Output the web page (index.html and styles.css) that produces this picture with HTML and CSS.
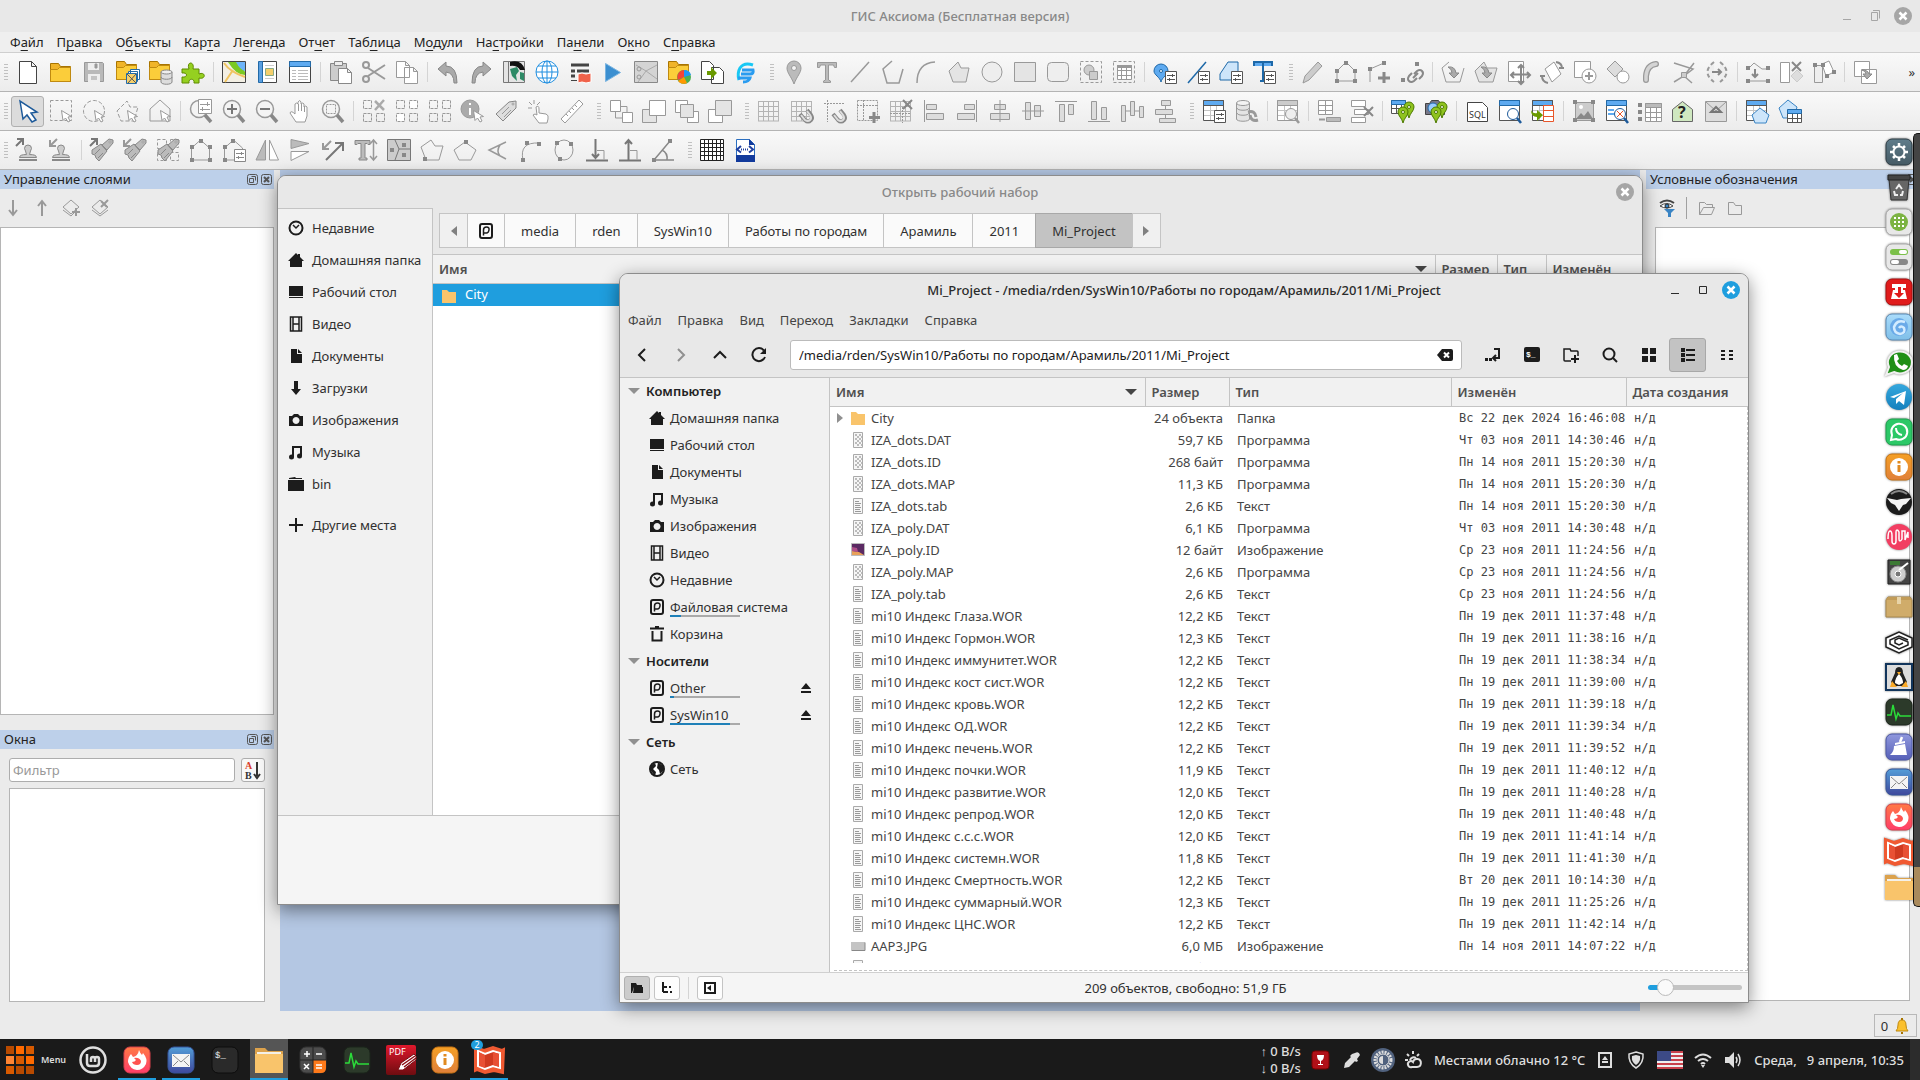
FILE: index.html
```html
<!DOCTYPE html>
<html lang="ru">
<head>
  <meta charset="UTF-8">
  <title>ГИС Аксиома</title>
  <link rel="stylesheet" href="styles.css">
</head>
<body>
<svg class="defs" width="0" height="0" aria-hidden="true">
  <linearGradient id="gFire" x2="0" y2="1"><stop stop-color="#ff7a45"/><stop offset="1" stop-color="#ff3d6a"/></linearGradient>
  <linearGradient id="gMail" x2="0" y2="1"><stop stop-color="#539ed8"/><stop offset="1" stop-color="#3f489c"/></linearGradient>
  <linearGradient id="gSlate" x2="0" y2="1"><stop stop-color="#607d8b"/><stop offset="1" stop-color="#455a64"/></linearGradient>
  <linearGradient id="gWave" x2="0" y2="1"><stop stop-color="#aadcfb"/><stop offset="1" stop-color="#7fbfe8"/></linearGradient>
  <linearGradient id="gTele" x2="0" y2="1"><stop stop-color="#35a8de"/><stop offset="1" stop-color="#1580bd"/></linearGradient>
  <linearGradient id="gSweep" x2="0" y2="1"><stop stop-color="#9098dd"/><stop offset="1" stop-color="#5660b8"/></linearGradient>
  <linearGradient id="gInfo" x2="0" y2="1"><stop stop-color="#f5a025"/><stop offset="1" stop-color="#e0803a"/></linearGradient>
  <linearGradient id="gPdf" x2="0" y2="1"><stop stop-color="#e0182c"/><stop offset="1" stop-color="#6e0c10"/></linearGradient>
</svg>
<div class="app">
  <header class="titlebar inactive">
    <h1>ГИС Аксиома (Бесплатная версия)</h1>
    <div class="controls">
      <button data-icon="min" aria-label="Свернуть"></button>
      <button data-icon="restore" aria-label="Развернуть"></button>
      <button class="close" data-icon="close" aria-label="Закрыть"></button>
    </div>
  </header>
  <nav class="menubar">
    <a href="#">Ф<u>а</u>йл</a><a href="#">П<u>р</u>авка</a><a href="#">О<u>б</u>ъекты</a><a href="#">Кар<u>т</u>а</a><a href="#">Л<u>е</u>генда</a><a href="#">От<u>ч</u>ет</a><a href="#">Таб<u>л</u>ица</a><a href="#">М<u>о</u>дули</a><a href="#">На<u>с</u>тройки</a><a href="#">Па<u>н</u>ели</a><a href="#">О<u>к</u>но</a><a href="#">С<u>п</u>равка</a>
  </nav>
  <div class="toolbar" data-tools="# new open save openSet openDb puzzle | map report table | paste cut copy | undo redo globeBook globe python play scissorsMap folderColor importDoc edge # pin textT line polyline arc polygon circle square roundSq groupFrame tableFrame | pinSet lineSet polySet textSet # pencil nodes nodeAdd nodeLink | rotOpen rotPoly moveSheet rotSheet addShape diamond pipe cross mirror | smooth delPart splitRect | copyTo"><span class="more">»</span></div>
  <div class="toolbar" data-tools="# cursor selRect selCircle selPoly selHouse | zoomSet zoomIn zoomOut hand zoomFit | selDel selInv selAll info tag tap ruler # order1 order2 order3 order4 # grid gridMagnet snap gridAdd gridDel alLeft alRight alCenter alMiddle alTop alBottom distH distV # tableSet dbSync | tableFind | rowAdd rowDel | tablePins camPins | sql tableZoom tableImp | image tableErr tableList help mail | tablePoly polyTable"></div>
  <div class="toolbar" data-tools="# stampUp stampDown | brushUp brushDown brushSel house houseSet flipH flipV arrowsX textUp mapNodes pentA pentB angle arcN ellN perpDown perpUp angleB # hatch xml"></div>

  <main class="workspace">
    <aside class="side">
      <section class="panel layers">
        <h2>Управление слоями <span><button data-icon="float" aria-label="Открепить"></button><button data-icon="xbox" aria-label="Закрыть"></button></span></h2>
        <div class="panel-tools">
          <button data-icon="down" aria-label="Ниже"></button>
          <button data-icon="up" aria-label="Выше"></button>
          <button data-icon="layerAdd" aria-label="Добавить слой"></button>
          <button data-icon="layerDel" aria-label="Удалить слой"></button>
        </div>
        <div class="sheet"></div>
      </section>
      <section class="panel windows">
        <h2>Окна <span><button data-icon="float" aria-label="Открепить"></button><button data-icon="xbox" aria-label="Закрыть"></button></span></h2>
        <div class="filter">
          <input type="text" placeholder="Фильтр" aria-label="Фильтр">
          <button data-icon="sort" aria-label="Сортировка"></button>
        </div>
        <div class="sheet"></div>
      </section>
    </aside>
    <div class="mdi"></div>
    <aside class="side">
      <section class="panel legend">
        <h2>Условные обозначения <span><button data-icon="xbox" aria-label="Закрыть"></button></span></h2>
        <div class="panel-tools">
          <button data-icon="eyeFilter" aria-label="Фильтр"></button><i></i>
          <button data-icon="folderOpenG" aria-label="Развернуть"></button>
          <button data-icon="folderG" aria-label="Свернуть"></button>
        </div>
        <div class="sheet"></div>
      </section>
    </aside>
  </main>
  <div class="status"><button class="bell">0 <span data-icon="bell"></span></button></div>
</div>

<!-- open file dialog -->
<section class="window dialog">
  <header class="titlebar inactive">
    <h1>Открыть рабочий набор</h1>
    <div class="controls"><button class="close" data-icon="close" aria-label="Закрыть"></button></div>
  </header>
  <div class="dialog-body">
    <nav class="places">
      <a href="#"><span data-icon="recent"></span>Недавние</a>
      <a href="#"><span data-icon="home"></span>Домашняя папка</a>
      <a href="#"><span data-icon="desk"></span>Рабочий стол</a>
      <a href="#"><span data-icon="video"></span>Видео</a>
      <a href="#"><span data-icon="doc"></span>Документы</a>
      <a href="#"><span data-icon="load"></span>Загрузки</a>
      <a href="#"><span data-icon="photo"></span>Изображения</a>
      <a href="#"><span data-icon="music"></span>Музыка</a>
      <a href="#"><span data-icon="bin"></span>bin</a>
      <a href="#" class="other"><span data-icon="plus"></span>Другие места</a>
    </nav>
    <div class="chooser">
      <div class="path">
        <button class="arrow" data-icon="triLeft" aria-label="Назад"></button>
        <button data-icon="disk" aria-label="Диск"></button>
        <button>media</button><button>rden</button><button>SysWin10</button><button>Работы по городам</button><button>Арамиль</button><button>2011</button><button class="current">Mi_Project</button>
        <button class="arrow" data-icon="triRight" aria-label="Вперёд"></button>
      </div>
      <table class="list">
        <thead><tr><th>Имя<span class="sorted" data-icon="triDown"></span></th><th class="c-size">Размер</th><th class="c-type">Тип</th><th class="c-date">Изменён</th></tr></thead>
        <tbody><tr class="selected"><td colspan="4"><span data-icon="folder"></span>City</td></tr></tbody>
      </table>
    </div>
  </div>
  <footer></footer>
</section>

<!-- file manager -->
<section class="window nemo">
  <header class="titlebar">
    <h1>Mi_Project - /media/rden/SysWin10/Работы по городам/Арамиль/2011/Mi_Project</h1>
    <div class="controls">
      <button data-icon="min" aria-label="Свернуть"></button>
      <button data-icon="max" aria-label="Развернуть"></button>
      <button class="close" data-icon="close" aria-label="Закрыть"></button>
    </div>
  </header>
  <nav class="menubar"><a href="#">Файл</a><a href="#">Правка</a><a href="#">Вид</a><a href="#">Переход</a><a href="#">Закладки</a><a href="#">Справка</a></nav>
  <div class="nav">
    <button data-icon="back" aria-label="Назад"></button>
    <button class="off" data-icon="forward" aria-label="Вперёд"></button>
    <button data-icon="upward" aria-label="Вверх"></button>
    <button data-icon="reload" aria-label="Обновить"></button>
    <div class="location">
      <input type="text" aria-label="Адрес" value="/media/rden/SysWin10/Работы по городам/Арамиль/2011/Mi_Project">
      <button data-icon="clear" aria-label="Очистить"></button>
    </div>
    <button data-icon="toggle" aria-label="Путь"></button>
    <button data-icon="term" aria-label="Терминал"></button>
    <button data-icon="newFolder" aria-label="Новая папка"></button>
    <button data-icon="search" aria-label="Поиск"></button>
    <button data-icon="vIcons" aria-label="Значки"></button>
    <button class="on" data-icon="vList" aria-label="Список"></button>
    <button data-icon="vCompact" aria-label="Компактно"></button>
  </div>
  <div class="nemo-body">
    <nav class="tree">
      <h3><span data-icon="triDown"></span>Компьютер</h3>
      <a href="#"><span data-icon="home"></span>Домашняя папка</a>
      <a href="#"><span data-icon="desk"></span>Рабочий стол</a>
      <a href="#"><span data-icon="doc"></span>Документы</a>
      <a href="#"><span data-icon="music"></span>Музыка</a>
      <a href="#"><span data-icon="photo"></span>Изображения</a>
      <a href="#"><span data-icon="video"></span>Видео</a>
      <a href="#"><span data-icon="recent"></span>Недавние</a>
      <a href="#"><span data-icon="disk"></span><b class="usage fs">Файловая система</b></a>
      <a href="#"><span data-icon="trash"></span>Корзина</a>
      <h3><span data-icon="triDown"></span>Носители</h3>
      <a href="#"><span data-icon="disk"></span><b class="usage other-disk">Other</b><span class="eject" data-icon="eject"></span></a>
      <a href="#"><span data-icon="disk"></span><b class="usage win-disk">SysWin10</b><span class="eject" data-icon="eject"></span></a>
      <h3><span data-icon="triDown"></span>Сеть</h3>
      <a href="#"><span data-icon="net"></span>Сеть</a>
    </nav>
    <div class="files">
      <div class="clip">
        <table class="list">
          <thead><tr><th>Имя<span class="sorted" data-icon="triDown"></span></th><th class="f-size">Размер</th><th class="f-type">Тип</th><th class="f-date">Изменён</th><th class="f-made">Дата создания</th></tr></thead>
          <tbody id="rows"></tbody>
        </table>
      </div>
    </div>
  </div>
  <footer>
    <button class="on" data-icon="sbPlaces" aria-label="Места"></button>
    <button data-icon="sbTree" aria-label="Дерево"></button>
    <i></i>
    <button data-icon="sbHide" aria-label="Скрыть"></button>
    <p>209 объектов, свободно: 51,9 ГБ</p>
    <input type="range" min="0" max="100" value="12" aria-label="Масштаб">
  </footer>
</section>

<!-- right edge dock -->
<div class="dock" id="dock"></div>
<div class="edge"></div>

<footer class="taskbar">
  <button class="start"><span data-icon="startGrid"></span>Menu</button>
  <button data-icon="mint" aria-label="Mint"></button>
  <button class="run" data-icon="aFirefox" aria-label="Firefox"></button>
  <button class="run" data-icon="aMail" aria-label="Почта"></button>
  <button data-icon="aTerm" aria-label="Терминал"></button>
  <button class="run on" data-icon="aFolder" aria-label="Файлы"></button>
  <button data-icon="aCalc" aria-label="Калькулятор"></button>
  <button data-icon="aPulse" aria-label="Монитор"></button>
  <button data-icon="aPdf" aria-label="PDF"></button>
  <button data-icon="aInfo" aria-label="Отчёты"></button>
  <button class="run badge" data-icon="aMap" aria-label="Аксиома"></button>
  <div class="tray">
    <span class="speed">↑ 0 B/s<br>↓ 0 B/s</span>
    <span data-icon="tCup"></span>
    <span data-icon="tPick"></span>
    <span data-icon="tGear"></span>
    <span data-icon="tSun"></span>
    <span class="weather">Местами облачно 12 °C</span>
    <span data-icon="tUsb"></span>
    <span data-icon="tShield"></span>
    <span class="flag" data-icon="tFlag"></span>
    <span data-icon="tWifi"></span>
    <span data-icon="tSound"></span>
    <time>Среда, &nbsp; 9 апреля, 10:35</time>
  </div>
</footer>
<script src="main.js"></script>
</body>
</html>
```
FILE: styles.css
```css
* {
  box-sizing: border-box;
}
body {
  margin: 0;
  height: 100vh;
  display: flex;
  flex-direction: column;
  overflow: hidden;
  position: relative;
  background: #ebebeb;
  color: #303030;
  font-family: "Noto Sans", "Open Sans", sans-serif;
  font-size: 13px;
  line-height: 18px;
}
button, input {
  font: inherit;
  color: inherit;
  border: 0;
  padding: 0;
  margin: 0;
  background: none;
}
a {
  color: inherit;
  text-decoration: none;
}
h1, h2, h3, p {
  margin: 0;
  font-size: 13px;
  font-weight: normal;
}
svg {
  display: block;
  fill: none;
  stroke: currentColor;
  overflow: visible;
}
svg text {
  stroke: none;
}
.defs {
  position: absolute;
}
[data-icon] {
  display: inline-flex;
  align-items: center;
  justify-content: center;
  flex: none;
}

/* main application */
.app {
  flex: 1;
  min-height: 0;
  display: flex;
  flex-direction: column;
}
.titlebar {
  height: 32px;
  display: flex;
  align-items: center;
  position: relative;
  color: #2b2b2b;
  background: #e8e8e8;
}
.titlebar h1 {
  flex: 1;
  text-align: center;
  font-weight: 500;
}
.titlebar.inactive {
  color: #888;
}
.controls {
  position: absolute;
  right: 8px;
  top: 7px;
  display: flex;
  gap: 10px;
}
.controls button {
  width: 18px;
  height: 18px;
}
.controls .close {
  border-radius: 50%;
  background: #1f9ede;
  color: #fff;
}
.inactive .controls {
  color: #a6a6a6;
}
.inactive .controls .close {
  background: #a6a6a6;
}
.menubar {
  height: 20px;
  display: flex;
  gap: 13px;
  padding-left: 10px;
  align-items: center;
  background: #efefef;
  color: #222;
}
.menubar u {
  text-underline-offset: 3px;
}
.toolbar {
  height: 39px;
  display: flex;
  align-items: center;
  border-top: 1px solid #cfcfcf;
  background: linear-gradient(#f9f9f9, #ececec);
  color: #999;
}
.toolbar + .toolbar {
  border-top-color: #b4b4b4;
}
.toolbar button {
  width: 33px;
  height: 31px;
  display: flex;
  align-items: center;
  justify-content: center;
}
.toolbar .active {
  background: #dcdcdc;
  border: 1px solid #b0b0b0;
  border-radius: 3px;
}
.toolbar .sep {
  width: 1px;
  height: 20px;
  margin: 0 3px 0 4px;
  background: #d4d4d4;
}
.toolbar .grip {
  width: 4px;
  height: 18px;
  margin: 0 3px 0 9px;
  background: radial-gradient(#aaa 40%, transparent 50%) 0 0 / 2px 3px;
  opacity: .7;
}
.toolbar .grip:first-child {
  margin-left: 4px;
}
.more {
  margin-left: auto;
  padding-right: 5px;
  color: #333;
}
.workspace {
  flex: 1;
  min-height: 0;
  display: grid;
  grid-template-columns: 274px 1fr 274px;
  gap: 6px;
  border-top: 1px solid #b4b4b4;
}
.mdi {
  background: #b4c7e3;
}
.side {
  display: flex;
  flex-direction: column;
  gap: 15px;
}
.panel {
  display: flex;
  flex-direction: column;
}
.panel h2 {
  height: 19px;
  padding: 0 2px 2px 4px;
  display: flex;
  align-items: center;
  justify-content: space-between;
  background: #bdd0ea;
  color: #222;
}
.panel h2 span {
  display: flex;
  gap: 3px;
}
.panel h2 button {
  color: #555;
}
.panel-tools {
  height: 38px;
  padding: 0 3px;
  display: flex;
  align-items: center;
  gap: 9px;
  color: #999;
}
.panel-tools button {
  width: 20px;
}
.panel-tools i {
  width: 1px;
  height: 22px;
  background: #a0a0a0;
}
.sheet {
  flex: 1;
  background: #fff;
  border: 1px solid #b5b5b5;
}
.layers {
  flex: 489 1 57px;
}
.windows {
  flex: 214 1 67px;
}
.windows .sheet {
  margin: 6px 9px 9px;
}
.legend {
  flex: 1;
}
.legend .panel-tools {
  padding-left: 11px;
}
.legend .sheet {
  margin: 0 10px 10px 9px;
}
.filter {
  padding: 9px 9px 0;
  display: flex;
  gap: 6px;
}
.filter input {
  flex: 1;
  height: 24px;
  padding: 0 3px;
  background: #fff;
  border: 1px solid #adadad;
  border-radius: 3px;
}
.filter input::placeholder {
  color: #999;
}
.filter button {
  width: 24px;
  height: 24px;
  border: 1px solid #adadad;
  border-radius: 3px;
  background: #f8f8f8;
}
.status {
  height: 28px;
  display: flex;
  justify-content: flex-end;
  padding: 3px 3px 2px;
}
.bell {
  width: 43px;
  border: 1px solid #b8b8b8;
  display: flex;
  align-items: center;
  justify-content: center;
  gap: 6px;
}

/* windows */
.window {
  position: absolute;
  display: flex;
  flex-direction: column;
  border: 1px solid #8c8c8c;
  border-radius: 9px 9px 0 0;
  background: #e8e8e8;
  box-shadow: 0 5px 18px rgba(0, 0, 0, .45);
  overflow: hidden;
}
.dialog {
  inset: 175px 277px 175px 277px;
}
.nemo {
  inset: 273px 171px 77px 619px;
}
.window .menubar {
  height: 28px;
  gap: 16px;
  padding-left: 8px;
  background: none;
  color: #444;
}
.dialog-body {
  flex: 1;
  display: flex;
}
.dialog footer {
  height: 89px;
  background: #f5f5f5;
  border-top: 1px solid #c4c4c4;
}
.places {
  width: 155px;
  background: #f1f1f1;
  border: solid #c4c4c4;
  border-width: 1px 1px 0 0;
  padding-top: 3px;
}
.places a {
  height: 32px;
  padding-left: 9px;
  display: flex;
  align-items: center;
  gap: 7px;
  white-space: nowrap;
}
.places .other {
  margin-top: 9px;
}
.places [data-icon], .tree a > [data-icon] {
  width: 18px;
  color: #1c1c1c;
}
.chooser {
  flex: 1;
  background: #fff;
}
.path {
  display: flex;
  height: 46px;
  padding: 5px 6px 6px;
  background: #e8e8e8;
}
.path button {
  padding: 0 16px;
  background: #fafafa;
  border: 1px solid #c4c4c4;
  margin-right: -1px;
}
.path [data-icon] {
  padding: 0;
  width: 38px;
  color: #1c1c1c;
}
.path .arrow {
  width: 29px;
  background: #f0f0f0;
  color: #808080;
}
.path .current {
  background: #c3c3c3;
  border-color: #a8a8a8;
}
.list {
  width: 100%;
  table-layout: fixed;
  border-collapse: collapse;
}
.list th {
  height: 29px;
  padding: 0 6px;
  text-align: left;
  font-weight: 600;
  color: #505050;
  background: #f1f1f1;
  border: 1px solid #c4c4c4;
  border-width: 1px 0 1px 1px;
}
.list th:first-child {
  border-left: 0;
}
.list td {
  height: 22px;
  padding: 0 6px 0 8px;
  white-space: nowrap;
  color: #454545;
}
.sorted {
  float: right;
  height: 18px;
  margin-right: 2px;
  color: #454545;
}
.c-size { width: 62px; }
.c-type { width: 49px; }
.c-date { width: 96px; }
.selected td {
  background: #1f9ede;
  color: #fff;
}
.selected [data-icon] {
  margin-right: 8px;
  vertical-align: middle;
}

/* file manager */
.nav {
  height: 43px;
  padding: 0 3px 2px;
  display: flex;
  align-items: center;
  color: #1c1c1c;
}
.nav > button {
  width: 37px;
  height: 34px;
  margin-right: 2px;
}
.nav > button:last-child {
  margin-right: 0;
}
.nav .off {
  color: #909090;
}
.nav .on {
  background: #c3c3c3;
  border: 1px solid #a8a8a8;
  border-radius: 3px;
}
.location {
  flex: 1;
  height: 30px;
  margin: 0 12px 0 11px;
  padding-right: 8px;
  display: flex;
  background: #fff;
  border: 1px solid #bbb;
  border-radius: 3px;
}
.location input {
  flex: 1;
  padding-left: 8px;
}
.nemo-body {
  flex: 1;
  min-height: 0;
  display: flex;
}
.tree {
  width: 210px;
  background: #f1f1f1;
  border: solid #c4c4c4;
  border-width: 1px 1px 0 0;
}
.tree h3 {
  height: 27px;
  display: flex;
  align-items: center;
  gap: 6px;
  padding: 0 0 2px 8px;
  font-weight: 600;
  color: #222;
}
.tree h3 [data-icon] {
  color: #909090;
}
.tree a {
  height: 27px;
  display: flex;
  align-items: center;
  gap: 4px;
  padding: 0 0 2px 28px;
}
.usage {
  position: relative;
  font-weight: normal;
}
.usage::after {
  content: "";
  position: absolute;
  left: 0;
  bottom: -1px;
  width: 70px;
  height: 2px;
  background: linear-gradient(90deg, #1f80b8 var(--used), #aaa var(--used));
}
.fs { --used: 11px; }
.other-disk { --used: 4px; }
.win-disk { --used: 60px; }
.tree .eject {
  margin: 0 14px 0 auto;
}
.files {
  flex: 1;
  background: #fff;
  padding-bottom: 9px;
  position: relative;
}
.files::after {
  content: "";
  position: absolute;
  inset: 30px 0 1px 4px;
  border: dashed #c4c4c4;
  border-width: 0 1px 1px 0;
}
.clip {
  height: 100%;
  overflow: hidden;
}
.f-size { width: 84px; }
.f-type { width: 222px; }
.f-date { width: 175px; }
.f-made { width: 122px; }
.files td:nth-child(2) {
  text-align: right;
}
.files td:nth-child(n + 4) {
  font-family: "DejaVu Sans Mono", monospace;
  font-size: 12px;
  white-space: pre;
}
.files td:first-child {
  padding-left: 5px;
}
.name {
  display: flex;
  align-items: center;
  gap: 4px;
}
.name .twist {
  width: 10px;
  color: #909090;
}
.name .kind {
  width: 18px;
  color: #aaa;
}
.nemo footer {
  height: 30px;
  padding: 0 6px 0 4px;
  display: flex;
  align-items: center;
  gap: 4px;
  background: #f5f5f5;
  border-top: 1px solid #d0d0d0;
  color: #303030;
}
.nemo footer button {
  width: 26px;
  height: 24px;
  background: #fdfdfd;
  border: 1px solid #c4c4c4;
  border-radius: 3px;
  color: #1c1c1c;
}
.nemo footer .on {
  background: #ccc;
  border-color: #b0b0b0;
}
.nemo footer i {
  width: 1px;
  height: 22px;
  margin: 0 4px;
  background: #d4d4d4;
}
.nemo footer p {
  flex: 1;
  text-align: center;
}
input[type="range"] {
  appearance: none;
  width: 94px;
  height: 18px;
}
input[type="range"]::-webkit-slider-runnable-track {
  height: 5px;
  border-radius: 3px;
  background: linear-gradient(90deg, #1f9ede 16px, #c4c4c4 16px);
}
input[type="range"]::-webkit-slider-thumb {
  appearance: none;
  width: 17px;
  height: 17px;
  margin-top: -6px;
  border: 1px solid #bbb;
  border-radius: 50%;
  background: #fafafa;
}

/* side dock */
.dock {
  position: absolute;
  top: 139px;
  right: 8px;
  display: grid;
  gap: 9px;
}
.dock button {
  width: 26px;
  height: 26px;
  filter: drop-shadow(0 0 1px rgba(0, 0, 0, .5));
}
.edge {
  position: absolute;
  top: 133px;
  right: 0;
  bottom: 173px;
  width: 7px;
  border: 1px solid #111;
  border-right: 0;
  border-radius: 5px 0 0 5px;
  background: linear-gradient(#444 95%, #a98a5c 95%);
}

/* taskbar */
.taskbar {
  height: 41px;
  display: flex;
  gap: 6px;
  padding-left: 6px;
  background: #1a1a1a;
  border-right: 10px solid #2c2c2c;
  color: #dedede;
}
.taskbar > button {
  width: 38px;
  position: relative;
}
.taskbar > .start {
  width: 62px;
  display: flex;
  align-items: center;
  gap: 7px;
  font-size: 9px;
  font-weight: 600;
}
.taskbar .on {
  background: #555;
}
.run::after {
  content: "";
  position: absolute;
  left: 0;
  right: 0;
  bottom: 0;
  height: 2px;
  background: #1f9ede;
}
.badge::before {
  content: "2";
  position: absolute;
  left: 1px;
  top: 1px;
  width: 12px;
  height: 10px;
  border-radius: 5px;
  background: #1f9ede;
  color: #fff;
  font-size: 9px;
  line-height: 10px;
  z-index: 1;
}
.tray {
  margin-left: auto;
  padding-right: 6px;
  display: flex;
  align-items: center;
  gap: 9px;
  font-weight: 500;
  white-space: nowrap;
}
.tray [data-icon] {
  width: 22px;
}
.tray .flag {
  width: 27px;
}
.speed {
  line-height: 17px;
}
```
FILE: main.js
```js
// pieces shared by several icons
const set = '<path fill="#fff" stroke="#555" d="M12.500 11.500h11v12h-11z"/><path stroke="#555" d="M14 15.500h8M14 19.500h8M19.500 14v3M16.500 18v3"/>';
const cur = '<path fill="#fff" d="M12.500 11.500l1.500 10 2.500-2.500 2.500 4 2-1-2-4 3.500-.5z"/>';
const sq4 = (a, b) => `<path stroke-dasharray="3 1" d="M1.500 1.500h8v8h-8zM1.500 14.500h8v8h-8zM14.500 14.500h8v8h-8z${a ? 'M14.500 1.500h8v8h-8z' : ''}"/>${b || ''}`;
const lens = '<circle cx="10" cy="10" r="8.500" fill="#f4f4f4" stroke-width="1.500"/><path stroke-width="3.500" stroke="#888" d="M16 16l6 7"/>';
const lens2 = (c, f) => `<circle cx="15" cy="15" r="5.500" fill="${f}" stroke="${c}"/><path stroke="${c}" stroke-width="2.500" d="M19 19l4 5"/>`;
const tbl = (c, h) => `<path fill="#fff" stroke="${c}" d="M1.500 1.500h20v20h-20z"/><path fill="${h}" stroke="${c}" d="M1.500 1.500h20v5h-20z"/><path stroke="#c4c4c4" d="M2 11.500h19M2 16.500h19M8.500 7v14M14.500 7v14"/>`;
// map pin whose tip is at x, y
const pinAt = (x, y, c, f, r = 5) => `<path fill="${f}" stroke="${c}" d="M${x} ${y}c-1-5-${r}-7-${r}-11a${r} ${r} 0 0 1 ${2 * r} 0c0 4-${r - 1} 6-${r} 11z"/><circle cx="${x}" cy="${y - 11}" r="1.500" fill="#fff" stroke="${c}"/>`;
const gpins = pinAt(18, 19, '#4d7a00', '#8fc31f') + pinAt(12, 24, '#4d7a00', '#8fc31f');
const folderY = '<path fill="#f0b429" stroke="#a87400" d="M1.500 3.500h8l2 3h10v15h-20z"/><path fill="#fbcd3a" stroke="#c08a10" d="M1.500 9.500h7l2-2h11v14h-20z"/>';
const dots = a => a.map(([x, y]) => `<path fill="#888" stroke="none" d="M${x - 2} ${y - 2}h4v4h-4z"/>`).join('');
const brush = '<path fill="#bbb" stroke="#888" d="M2 12l9-6 6 7-8 10-3-3-1-3-3-1zM12 7l7-6 4 1v3l-6 7z"/><path stroke="#888" d="M11 6l6 7M5 16l5-5M8 20l5-5"/><circle cx="20" cy="4" r="1" fill="#fff"/>';
const house = '<path d="M2.500 22v-12l9-8 9 8v12z"/>';
const stamp = '<path fill="#ccc" stroke="#888" d="M3.500 19.500q0-3 7-3-1-4-2-6a3.500 3.500 0 1 1 7 0q-1 2-2 6 7 0 7 3z"/><path stroke="#888" stroke-width="2" d="M3 22h18"/>';
const magnet = '<path stroke="#888" stroke-width="4" d="M10 15l5 6q3 3 6 0 2-2 0-5l-4-5"/><path stroke="#ddd" stroke-width="2" d="M11 16l4 5q3 2 5 0 2-2 0-5l-3-4"/>';
const gridP = '<path stroke="#b4b4b4" d="M1.500 2v20M6.500 2v20M11.500 2v20M16.500 2v20M21.500 2v20M1 2.500h21M1 7.500h21M1 12.500h21M1 17.500h21M1 22h21"/>';
const tile = (f, s) => `<rect x="1" y="1" width="26" height="26" rx="6" fill="${f}" stroke="${s}"/>`;
const fileBox = '<path fill="#f6f6f6" stroke="#aaa" d="M3.500.5h9v15h-9z"/>';

const icons = {
  new: '<path fill="#fff" stroke="#444" d="M3.500 1.500h12l5 5v17h-17zM15.500 1.500v5h5"/>',
  open: folderY,
  save: '<path fill="#b9b9b9" stroke="#999" d="M2.500 2.500h18l1 1v18h-19z"/><path fill="#eee" stroke="none" d="M6 3h11v7h-11zM6 14h12v8h-12z"/><path fill="#999" d="M13 4h2v4h-2zM9 17h6M9 19h6"/>',
  openSet: '<g transform="translate(0 -2)">' + folderY + '</g><path fill="#fff" stroke="#226aa8" d="M15.500 9.500h9v10h-9zM13.500 11.500h9v10h-9z"/><path fill="#f5cf6b" stroke="#226aa8" d="M11.500 13.500h10v10h-10z"/><path stroke="#555" d="M12 14l9 9M21 14l-8 9"/>',
  openDb: '<g transform="translate(0 -2)">' + folderY + '</g><path fill="#ddd" stroke="#888" d="M13 12v10c0 3 11 3 11 0v-10"/><ellipse cx="18.500" cy="12" rx="5.500" ry="2" fill="#eee" stroke="#888"/><path stroke="#888" d="M13 17c0 3 11 3 11 0"/>',
  puzzle: '<path fill="#95d020" stroke="#5f8a00" d="M1 9h7c-3-8 6-8 4 0h6v5c7-3 7 6 0 4v5h-5c1-5-6-5-5 0h-7v-6c6 1 6-5 0-4z"/>',
  map: '<path fill="#f3efe4" stroke="#444" d="M.5 1.500h23v21h-23z"/><path fill="#7ac923" stroke="none" d="M6 2h12l5 10v3q-9 0-17-13z"/><path fill="#6db3f8" stroke="none" d="M14 2h9v9q-5-1-9-9z"/><path stroke="#f0c460" stroke-width="2" d="M2 3q6 9 21 14M11 10l-8 12"/>',
  report: '<path fill="#fff" stroke="#444" d="M4.500 1.500h17v21h-17z"/><path fill="#5a9fe0" stroke="#226aa8" d="M3.500 1.500h4v21h-4z"/><path fill="#f5cf6b" stroke="#8a8" d="M10.500 8.500h8v7h-8z"/><path stroke="#ccc" d="M10 5.500h9M10 18.500h9"/>',
  table: '<path fill="#fff" stroke="#444" d="M1.500 1.500h21v21h-21z"/><path fill="#5eaaf0" stroke="#226aa8" d="M1.500 1.500h21v5h-21z"/><path stroke="#bbb" d="M4 10.500h4M10 10.500h10M4 13.500h4M10 13.500h10M4 16.500h4M10 16.500h10M4 19.500h4M10 19.500h10"/>',
  paste: '<path fill="#ccc" stroke="#888" d="M1.500 3.500h16v17h-16z"/><path fill="#eee" stroke="#888" d="M5.500 1.500h8v4h-8z"/><path fill="#fff" stroke="#888" d="M9.500 8.500h9l4 4v11h-13zM18.500 8.500v4h4"/>',
  cut: '<path stroke-width="2" d="M23 5L6 16M23 19L6 8"/><circle cx="4" cy="5" r="3" stroke-width="2"/><circle cx="4" cy="19" r="3" stroke-width="2"/>',
  copy: '<path fill="#fff" d="M1.500 1.500h9l4 4v12h-13zM10.500 1.500v4h4M9.500 7.500h9l4 4v12h-13zM18.500 7.500v4h4"/>',
  undo: '<path fill="#aaa" stroke="#888" d="M2 9l8-7v4q11 0 11 17h-3q0-10-8-11v4z"/>',
  redo: '<path fill="#aaa" stroke="#888" d="M22 9l-8-7v4q-11 0-11 17h3q0-10 8-11v4z"/>',
  globeBook: '<path fill="#e4e4e4" stroke="#777" d="M1.500 1.500h21v21h-21z"/><path fill="#111" stroke="none" d="M8 2q12-3 15 8h-5q-3-5-10-4z"/><path fill="#2d8a66" stroke="none" d="M8 9l7-2 2 4-3 4 1 6-5-5zM18 12l4 1v8l-4-2z"/><path stroke="#777" d="M6.500 2v20"/>',
  globe: '<g stroke="#1f8ee0" fill="#fff"><circle cx="12" cy="12" r="11"/><ellipse cx="12" cy="12" rx="5" ry="11"/><path d="M12 1v22M1 12h22M3 6h18M3 18h18"/></g>',
  python: '<path stroke="#444" stroke-width="3" d="M3 5h18M3 11h4M9 11h12M3 16h4"/><path stroke="#444" d="M3 20.500h6"/><path fill="#f0624a" stroke="#fff" d="M10 14l4-1 4 1 5-1v9l-5 1-4-1-4 1z"/>',
  play: '<path fill="#3c8fd0" stroke="#7ab4e0" d="M4.500 3.500v18l15-9z"/>',
  scissorsMap: '<path fill="#d4d4d4" stroke="#888" d="M.5 1.500h23v21h-23z"/><path stroke="#aaa" d="M2 5l10 6 11-6M4 22l8-11 11 8"/><circle cx="5" cy="9" r="2"/><circle cx="5" cy="17" r="2"/>',
  folderColor: '<g transform="translate(0 -2)">' + folderY + '</g><circle cx="17" cy="17" r="7" fill="#4caf50" stroke="none"/><path fill="#f44336" stroke="none" d="M17 17v-7a7 7 0 0 0-6 10z"/><path fill="#ff9800" stroke="none" d="M17 17l-6 4a7 7 0 0 0 9 2z"/><path fill="#2196f3" stroke="none" d="M17 17v-7a7 7 0 0 1 7 5z"/>',
  importDoc: '<path fill="#fff" stroke="#444" d="M1.500 1.500h8l4 4v14h-12zM11.500 7.500h8l4 4v12h-12z"/><path fill="#6a9a00" stroke="none" d="M7 11h4v-4l6 6-6 6v-4h-4z"/>',
  edge: '<path stroke="#18c8f4" stroke-width="3" d="M20 5q-9-3-13 3-3 5-1 12"/><path stroke="#2a9cf0" stroke-width="3" d="M9 10h11q1 4-3 4H8M5 18h12q-1 4-7 4"/>',
  pin: '<path fill="#bbb" stroke="#999" d="M12 24c-3-8-7-11-7-16a7 7 0 0 1 14 0c0 5-4 8-7 16z"/><circle cx="12" cy="8" r="2.500" fill="#f4f4f4"/>',
  textT: '<path fill="#bbb" d="M2.500 2.500h19v5h-2l-1-2.500h-5v15l2 1v1.500h-7v-1.500l2-1v-15h-5l-1 2.500h-2z"/>',
  line: '<path stroke-width="1.500" d="M3 22L21 2"/>',
  polyline: '<path stroke-width="1.500" d="M11 1L2 9l4 14h12l4-14"/>',
  arc: '<path stroke-width="1.500" d="M3 23Q3 3 21 2"/>',
  polygon: '<path fill="#e4e4e4" d="M2 11l9-9 3 6h8l-3 14h-13z"/>',
  circle: '<circle cx="12" cy="12" r="10" fill="#eee"/>',
  square: '<path fill="#e4e4e4" d="M1.500 2.500h21v19h-21z"/>',
  roundSq: '<rect x="1.500" y="2.500" width="21" height="19" rx="4" fill="#eee"/>',
  groupFrame: '<path stroke-dasharray="3 2" d="M1.500 1.500h21v21h-21z"/><circle cx="10" cy="10" r="5" fill="#ccc"/><path fill="#ccc" d="M10.500 11.500h8v8h-8z"/>',
  tableFrame: '<path stroke-dasharray="3 2" d="M1.500 1.500h21v21h-21z"/><path fill="#fff" d="M5.500 5.500h14v14h-14zM5 10.500h14M5 15.500h14M9.500 8v12M14.500 8v12"/><path stroke-width="3" d="M5 6.500h15"/>',
  pinSet: pinAt(8, 22, '#1d68a8', '#5eaaf0', 7) + set,
  lineSet: '<path stroke="#1d68a8" stroke-width="1.500" d="M2 23L20 2"/>' + set,
  polySet: '<path fill="#cde5fa" stroke="#1d68a8" d="M1 20V14L9 2h10v18z"/>' + set,
  textSet: '<path stroke="#1d68a8" stroke-width="2" fill="#5eaaf0" d="M2 6V2h18v4M11 2v19M8 21h6"/>' + set,
  pencil: '<path fill="#ccc" d="M2 23l2-7L17 2l4 4L8 20z"/>',
  nodes: '<path d="M3 21V11l9-9 9 9v10z"/>' + dots([[3, 11], [12, 3], [21, 11], [3, 21], [21, 21]]),
  nodeAdd: '<path d="M3 22V9l14-6"/>' + dots([[3, 9], [17, 3]]) + '<path stroke="#888" stroke-width="3" d="M17 12v11M11 18h12"/>',
  nodeLink: dots([[17, 4], [3, 20]]) + '<path stroke-width="2" stroke="#888" d="M14 14l3-3q3-2 5 0t0 5l-3 3M17 18l-3 3q-3 2-5 0t0-5l3-3M13 18l5-5"/>',
  rotOpen: '<path d="M8 2L1 8l4 14h14l4-14"/><path fill="#aaa" stroke="#888" d="M7 7q7-1 8 6h3l-5 5-5-5h3q0-4-4-6z"/>',
  rotPoly: '<path fill="#e4e4e4" d="M1 11l9-9 3 6h10l-4 14H5z"/><path fill="#aaa" stroke="#888" d="M7 7q7-1 8 6h3l-5 5-5-5h3q0-4-4-6z"/>',
  moveSheet: '<path fill="#fff" d="M1.500 1.500h15v20h-15z"/><path stroke="#888" stroke-width="2" d="M14 6v17M5 14.500h18M11 8l3-3 3 3M11 21l3 3 3-3M7 12l-3 3 3 3M20 12l3 3-3 3"/>',
  rotSheet: '<path fill="#fff" d="M5 9l9-7 7 12-9 8z"/><path stroke="#888" stroke-width="2" d="M16 2q6 1 6 6M19 8h5M8 23q-6-1-6-7M0 16h5"/>',
  addShape: '<path fill="#fff" d="M1.500 1.500h16v16h-16z"/><circle cx="16" cy="16" r="7" fill="#fff"/><path stroke-width="2" d="M16 12v8M12 16h8"/>',
  diamond: '<path fill="#ddd" d="M1 9l8-8 8 8-8 8z"/><circle cx="17" cy="17" r="6" fill="#fff"/>',
  pipe: '<path stroke-width="6" stroke-linecap="round" d="M7 20V16Q8 5 17 4"/><path stroke="#d4d4d4" stroke-width="3.500" stroke-linecap="round" d="M7 20V16Q8 5 17 4"/>',
  cross: '<path stroke-width="1.500" d="M2 3l19 6-9 7L2 22M22 3L12 16l8 7"/><path fill="#ccc" d="M9.500 12.500h5v5h-5z"/>',
  mirror: '<path fill="#eee" stroke-width="2" stroke-dasharray="4 3" d="M9 2Q-4 12 9 22M15 2Q28 12 15 22"/><path stroke="#888" stroke-width="2" d="M7 12h9M13 9l3 3-3 3"/>',
  smooth: '<path d="M2 9L8 3l8 6h6M2 21h20"/><path stroke="#888" stroke-width="2" d="M9 9v8M6 14l3 3 3-3"/>' + dots([[2, 8], [22, 8], [2, 21], [22, 21]]),
  delPart: '<path fill="#fff" d="M1.500 2.500h9v20h-9z"/><path fill="#ddd" stroke="#ccc" d="M12 16l6-6 6 6-6 6z"/><path stroke="#888" stroke-width="2" d="M13 2l9 9M22 2l-9 9"/>',
  splitRect: '<path fill="#eee" d="M2.500 5.500h8v17h-8z"/><path fill="#fff" d="M10 4l7-3 5 11-8 4z"/>' + dots([[3, 5], [11, 5], [15, 16], [22, 12]]),
  copyTo: '<path fill="#fff" d="M1.500 1.500h15v15h-15zM8.500 9.500h15v14h-15z"/><path fill="#aaa" stroke="#888" d="M9 10q6 0 7 4h3l-5 5-4-5h3q0-3-4-4z"/>',
  cursor: '<path fill="#fff" stroke="#1d5a9a" stroke-width="1.500" d="M4 2l3 18 4-4 5 7 4-2-5-7 6-1z"/>',
  selRect: '<path stroke-dasharray="3 2" d="M1.500 1.500h21v20h-21z"/>' + cur,
  selCircle: '<circle stroke-dasharray="4 2" cx="12" cy="12" r="10.500"/>' + cur,
  selPoly: '<path stroke-dasharray="4 2" d="M2 12l10-10 3 6h8l-4 14H6z"/>' + cur,
  selHouse: '<path d="M2 22V10l10-9 10 9v12z"/>' + cur,
  zoomSet: lens + '<path fill="#fff" d="M9.500 .5h13v14h-13z"/><path d="M11 5.500h10M11 10.500h10M18.500 3v4M13.500 8v4"/>',
  zoomIn: lens + '<path stroke="#777" stroke-width="2" d="M10 5v10M5 10h10"/>',
  zoomOut: lens + '<path stroke="#777" stroke-width="2" d="M5 10h10"/>',
  hand: '<path fill="#fff" d="M8 23L2 14q1-3 5 1V5q2-2 3 0V3q2-3 3 0v2q2-2 3 0v3q2-2 3 0v9l-2 6z"/><path d="M10.500 5v7M13.500 5v7M16.500 7v6"/>',
  zoomFit: lens + '<path stroke-dasharray="2 1" d="M5.500 5.500h9v9h-9z"/>',
  selDel: sq4(0, '<path stroke-width="2.500" stroke="#aaa" d="M13 2l9 9M22 1l-9 10"/>'),
  selInv: '<path fill="#fff" stroke="none" d="M14 1h9v9h-9zM1 14h9v9h-9z"/>' + sq4(1),
  selAll: sq4(1),
  info: '<circle cx="9" cy="10" r="9" fill="#aaa"/><path stroke="#fff" stroke-width="2" d="M9 9v7M9 4v2"/>' + cur,
  tag: '<path fill="#ddd" stroke="#888" d="M2 15L15 3l7-1v7L9 22z"/><path d="M8 15l7-7M10 18l7-7"/><circle cx="19" cy="5" r="1" fill="#fff"/>',
  tap: '<path fill="#fff" d="M9 8q3-2 3 2v4l7 1q3 1 2 5l-1 4h-8l-6-8q2-2 4 0z"/><path d="M7 1v4M2 3l3 3M13 3l-3 3M1 9h4"/>',
  ruler: '<path fill="#fff" d="M1 20L19 1l4 4L5 24z"/><path d="M6 15l2 2M9 12l2 2M12 9l2 2M15 6l2 2"/>',
  order1: '<path fill="#fff" d="M1.500 1.500h10v11h-10zM13.500 13.500h10v10h-10z"/><path d="M12 7.500h6V13M6.500 13v6H13"/>',
  order2: '<path fill="#e4e4e4" d="M.5 10.500h14v13h-14z"/><path fill="#fff" d="M7.500 1.500h16v15h-16z"/>',
  order3: '<path fill="#fff" d="M.5 1.500h12v12h-12zM12.500 12.500h11v11h-11z"/><path fill="#e4e4e4" d="M5.500 5.500h13v13h-13z"/>',
  order4: '<path fill="#fff" d="M.5 10.500h14v13h-14z"/><path fill="#e4e4e4" d="M7.500 1.500h16v15h-16z"/>',
  grid: gridP,
  gridMagnet: gridP + magnet,
  snap: '<path stroke-dasharray="2 1" d="M1 4.500h20M4.500 1v22"/>' + magnet,
  gridAdd: '<path d="M1.500 1.500h20v20h-20zM1 6.500h20M7.500 1v20" stroke-dasharray="2 1"/><path stroke="#888" stroke-width="3" d="M18 13v11M13 18.500h11"/>',
  gridDel: gridP + '<path stroke-dasharray="2 1" d="M1 14.500h20M13.500 8v16"/><path stroke-width="2" stroke="#888" d="M14 1l9 9M23 1l-9 9"/>',
  alLeft: '<path d="M2.500 1v22"/><path fill="#ddd" d="M4.500 5.500h10v5h-10zM4.500 14.500h17v6h-17z"/>',
  alRight: '<path d="M21.500 1v22"/><path fill="#ddd" d="M9.500 5.500h10v5h-10zM2.500 14.500h17v6h-17z"/>',
  alCenter: '<path fill="#ddd" d="M6.500 5.500h11v5h-11zM2.500 14.500h19v6h-19z"/><path d="M12 1v22"/>',
  alMiddle: '<path fill="#ddd" d="M4.500 3.500h5v17h-5zM13.500 6.500h6v11h-6z"/><path d="M1 12h22"/>',
  alTop: '<path d="M1 2.500h22"/><path fill="#ddd" d="M5.500 5.500h5v17h-5zM14.500 5.500h5v10h-5z"/>',
  alBottom: '<path d="M1 22.500h22"/><path fill="#ddd" d="M4.500 2.500h5v18h-5zM14.500 8.500h5v12h-5z"/>',
  distH: '<path fill="#ddd" d="M1.500 6.500h4v16h-4zM10.500 2.500h4v14h-4zM19.500 7.500h4v11h-4zM6 12h4M15 12h4"/>',
  distV: '<path fill="#ddd" d="M8.500 1.500h9v5h-9zM2.500 10.500h17v5h-17zM6.500 19.500h16v4h-16zM12.500 7v3M12.500 16v3"/>',
  tableSet: tbl('#555', '#5eaaf0') + set,
  dbSync: '<path fill="#e4e4e4" d="M1.500 4v16c0 3 13 3 13 0V4"/><ellipse cx="8" cy="4" rx="6.500" ry="2.500" fill="#f4f4f4"/><path d="M2 9c0 3 12 3 12 0M2 14c0 3 12 3 12 0"/><path stroke="#999" stroke-width="3" d="M13 13q7-2 8 5M23 21q-7 2-8-5"/>',
  tableFind: tbl('#999', '#ccc') + lens2('#999', '#eee'),
  rowAdd: '<path fill="#fff" d="M1.500 1.500h14v14h-14zM1 6.500h14M1 11.500h14M8.500 1v14"/><path fill="#bbb" d="M9.500 18.500h14v4h-14z"/><path stroke-width="2" d="M8 20.500H2"/>',
  rowDel: '<path fill="#fff" d="M1.500 1.500h14v6h-14zM4.500 10.500h14v5h-14zM1.500 18.500h14v5h-14z"/><path stroke="#888" stroke-width="2" d="M14 8l9 9M23 8l-9 9"/>',
  tablePins: '<path fill="#fff" stroke="#555" d="M.5 1.500h14v13h-14zM1 9.500h13M5.500 4v10M10.500 4v10"/><path fill="#5eaaf0" stroke="#226aa8" d="M.5 1.500h14v4h-14z"/>' + gpins,
  camPins: '<path fill="#778" stroke="#444" d="M1.500 4.500h4l2-3h7l2 3h4v11h-19z"/><circle cx="9" cy="9" r="5" fill="#9cf" stroke="#226aa8"/>' + gpins,
  sql: '<path fill="#fff" stroke="#444" d="M2.500 3.500h15l5 5v14h-20z"/><text x="4" y="19" font-size="9" fill="#333">SQL</text>',
  tableZoom: '<path fill="#fff" stroke="#555" d="M1.500 1.500h20v20h-20z"/><path fill="#5eaaf0" stroke="#226aa8" d="M1.500 1.500h20v5h-20z"/>' + lens2('#1d5a9a', '#fff'),
  tableImp: tbl('#555', '#5eaaf0') + '<path stroke="#e8562a" fill="#fff" d="M12.500 6.500h10v16h-10zM12 11.500h10M12 17.500h10"/><path fill="#6a9a00" stroke="none" d="M0 11q2 4 6 3v-3l6 5-6 6v-4q-6 0-6-7z"/>',
  image: '<path fill="#ccc" d="M3.500 3.500h18v18h-18z"/><path fill="#888" stroke="none" d="M4 20l5-6 3 3 4-5 5 8z"/><circle cx="9" cy="8" r="2" fill="#fff" stroke="none"/>' + dots([[3, 3], [21, 3], [3, 21], [21, 21]]),
  tableErr: '<path fill="#fff" stroke="#555" d="M1.500 1.500h20v20h-20z"/><path fill="#5eaaf0" stroke="#226aa8" d="M1.500 1.500h20v5h-20z"/><path stroke="#5eaaf0" stroke-width="2" d="M3 11h6M3 15h6"/>' + lens2('#1d5a9a', '#fff') + '<path stroke="#e8562a" d="M12 12l6 6M18 12l-6 6"/>',
  tableList: '<path fill="#fff" d="M7.500 4.500h16v18h-16zM7 13.500h16M7 18.500h16M12.500 5v17M18.500 5v17"/><path fill="#bbb" d="M7.500 4.500h16v4h-16z"/>' + dots([[2, 6], [2, 13], [2, 20]]),
  help: '<path fill="#cfe8c0" stroke="#666" d="M1.500 22.500v-12l10-8 10 8v12z"/><text x="7" y="19" font-size="16" font-weight="700" fill="#222">?</text>',
  mail: '<path fill="#ddd" d="M1.500 2.500h21v20h-21z"/><path d="M2 3l10 9 10-9"/><path stroke="#777" stroke-width="2" d="M7 13l5-5 5 5z"/>',
  tablePoly: tbl('#555', '#5eaaf0') + '<path fill="#cde5fa" stroke="#3a84c4" d="M7 16l8-7 9 7-3 8h-11z"/>',
  polyTable: '<path fill="#cde5fa" stroke="#3a84c4" d="M1 9l9-8 9 7-3 11h-11z"/><path fill="#fff" stroke="#555" d="M9.500 11.500h14v12h-14zM9 19.500h14M14.500 14v9M19.500 14v9"/><path fill="#5eaaf0" stroke="#226aa8" d="M9.500 10.500h14v4h-14z"/>',
  stampUp: stamp + '<path stroke="#777" stroke-width="2" d="M0 8l6-6M1 1h6v6"/>',
  stampDown: stamp + '<path stroke="#999" stroke-width="2" d="M8 1L2 7M1 2v6h6"/>',
  brushUp: brush + '<path stroke="#777" stroke-width="2" d="M0 8l6-6M1 1h6v6"/>',
  brushDown: brush + '<path stroke="#999" stroke-width="2" d="M8 1L2 7M1 2v6h6"/>',
  brushSel: '<path stroke-dasharray="3 2" d="M1.500 1.500h9v9h-9zM14.500 1.500h8v8h-8zM1.500 14.500h9v8h-9zM14.500 14.500h8v8h-8z"/>' + brush,
  house: house + dots([[3, 9], [12, 3], [21, 9], [3, 22], [21, 22]]),
  houseSet: house + dots([[3, 9], [11, 3], [3, 22]]) + set.replace(/#555/g, '#888'),
  flipH: '<path fill="#bbb" d="M10.500 2v20h-9.500z"/><path fill="#fff" d="M14.500 2v20h9z"/>',
  flipV: '<path fill="#bbb" d="M3 1.500v9l18-5z"/><path fill="#fff" d="M3 22.500v-9h18z"/>',
  arrowsX: '<path stroke-width="2" d="M10 3L2 11M2 5v6h6"/><path stroke="#777" stroke-width="2" d="M5 22L22 5M14 5h8v8"/>',
  textUp: '<path fill="#bbb" stroke="#888" d="M1 2.500h15v4h-2l-1-1H11V20h2v2H5v-2h2V5.500H4l-1 1H1z"/><path stroke-width="1.500" d="M19.500 2v20M16 6l3.500-4L23 6M16 18l3.500 4 3.500-4"/>',
  mapNodes: '<path fill="#ccc" stroke="#777" d="M.5 1.500h23v21h-23zM8 2l4 9-4 11M12 11h11"/>' + dots([[5, 12], [17, 7], [17, 17]]),
  pentA: '<path d="M1 9l10-7 4 6h8l-4 14H6z"/>' + dots([[5, 21]]),
  pentB: '<path d="M1 12l11-8 11 8-5 10H6z"/>' + dots([[13, 4]]),
  angle: '<path stroke-width="1.500" d="M20 4L3 12l17 9M14 7q-4 6 0 11"/>',
  arcN: '<path d="M4 22Q0 4 20 5"/>' + dots([[8, 5], [20, 6], [4, 22]]),
  ellN: '<ellipse cx="12" cy="12" rx="9" ry="10"/>' + dots([[5, 5], [19, 6], [8, 21]]),
  perpDown: '<path stroke="#777" stroke-width="2" d="M1 22.500h22M10.500 1v18M7 16l3.500 4 3.500-4"/><path d="M12 12.500h7v9"/>',
  perpUp: '<path stroke="#777" stroke-width="2" d="M1 22.500h22M10.500 3v19M7 6l3.500-4L14 6"/><path d="M12 12.500h7v9"/>',
  angleB: '<path stroke-width="1.500" stroke="#888" d="M3 22L19 3M3 22h20M11 12q6 3 5 10"/>' + dots([[3, 22], [19, 3]]),
  hatch: '<path fill="#fff" stroke="#222" d="M.5 1.500h23v21h-23zM4.500 1v22M8.500 1v22M12.500 1v22M16.500 1v22M20.500 1v22M0 5.500h23M0 9.500h23M0 13.500h23M0 17.500h23"/>',
  xml: '<path fill="#fff" stroke="#2b6fc0" d="M3.500 1.500h13l5 5v16h-18z"/><path fill="#123a9c" stroke="none" d="M16 1l6 6h-6zM3 17h19v7H3z"/><path stroke="#2040a0" stroke-width="2" d="M8 8l-4 3.500 4 3M16 8l4 3.500-4 3"/><path stroke="#2040a0" stroke-width="2" stroke-dasharray="1 1" d="M8 11.500h8"/>',

  // window and panel controls
  min: [18, '<path d="M5 12.500h8"/>'],
  restore: [18, '<path d="M5.500 5.500h6v8h-6zM7 3.500h6.500v8"/>'],
  max: [18, '<path d="M5.500 5.500h7v7h-7z"/>'],
  close: [18, '<path stroke-width="2.500" d="M5.500 5.500l7 7M12.500 5.500l-7 7"/>'],
  float: [11, '<rect x=".5" y="1.500" width="10" height="10" rx="2"/><path d="M2.500 5.500h4v4h-4zM4.500 3.500h4v4"/>'],
  xbox: [11, '<rect x=".5" y="1.500" width="10" height="10" rx="2"/><path stroke-width="2" d="M3 4l5 5M8 4L3 9"/>'],
  down: [18, '<path stroke-width="2" d="M9 1v14M5 11l4 5 4-5"/>'],
  up: [18, '<path stroke-width="2" d="M9 17V3M5 7l4-5 4 5"/>'],
  layerAdd: [18, '<path d="M1 8l8-7 8 7-8 7zM1 11l8 6 3-3"/><path stroke-width="2" d="M14 9v8M10 13h8"/>'],
  layerDel: [18, '<path d="M1 8l8-7 8 7-8 7zM1 11l8 6 8-6"/><path stroke-width="2" d="M10 2l6 6M17 1l-7 7"/>'],
  sort: [20, '<text x="2" y="9" font-size="10" font-weight="700" font-family="Liberation Serif" fill="#d8402a">A</text><text x="2" y="19" font-size="10" font-weight="700" font-family="Liberation Serif" fill="#333">B</text><path stroke="#333" stroke-width="2" d="M14 2v14M11 14l3 4 3-4"/>'],
  eyeFilter: [18, '<path stroke="#444" stroke-width="2" d="M2 4q7-5 14 0"/><path stroke="#444" fill="#fff" d="M2 7q7-5 13 0-6 4-13 0z"/><circle cx="9" cy="7" r="2" fill="#3a84c4" stroke="#222"/><path fill="#3a84c4" stroke="none" d="M6 10h11l-4 4v4h-3v-4z"/>'],
  folderOpenG: [18, '<path d="M2.500 15.500v-12h5l2 2h6v3M2.500 15.500l4-7h11l-3 7z"/>'],
  folderG: [18, '<path d="M2.500 15.500v-12h5l2 3h6v9z"/>'],
  bell: [16, '<path fill="#fbc02d" stroke="#c08a10" d="M2 13q2-2 2-6 0-5 4-5t4 5q0 4 2 6z"/><path stroke="#a87400" stroke-width="2" d="M7 15h2M8 0v2"/>'],

  // symbolic icons
  recent: [16, '<circle cx="8" cy="8" r="6.500" stroke-width="2"/><path stroke-width="1.500" d="M5 5l3 3 3-3"/>'],
  home: [16, '<path fill="currentColor" stroke="none" d="M8 1l2 2V2h2v3l4 4h-2v6H2V9H0z"/>'],
  desk: [16, '<path fill="currentColor" stroke="none" d="M1 2h14v10H1zM1 13h14v1H1z"/>'],
  video: [16, '<path stroke-width="1.500" d="M2.500 1h11v14h-11zM5 1v14M11 1v14M5 8h6"/>'],
  doc: [16, '<path fill="currentColor" stroke="none" d="M3 1h6v5h5v9H3zM10 1l4 4h-4z"/>'],
  load: [16, '<path fill="currentColor" stroke="none" d="M6 1h4v8h3l-5 6-5-6h3z"/>'],
  photo: [16, '<path fill="currentColor" fill-rule="evenodd" stroke="none" d="M1 4h3l2-2h4l2 2h3v10H1zM8 5a3.500 3.500 0 1 0 .1 0z"/>'],
  music: [16, '<path stroke-width="2" d="M5 13V3h8v9"/><circle cx="3.500" cy="13" r="2.500" fill="currentColor" stroke="none"/><circle cx="11.500" cy="12" r="2.500" fill="currentColor" stroke="none"/>'],
  bin: [16, '<path fill="currentColor" stroke="none" d="M1 2l6-1 1 1h6v1H1zM0 4h16v11H0z"/>'],
  plus: [16, '<path stroke-width="2" d="M8 1v14M1 8h14"/>'],
  disk: [16, '<rect x="2" y="1" width="12" height="14" rx="2" stroke-width="2"/><path stroke-width="1.500" d="M5.500 12.500V7q0-3 3-3t2.500 3-2.500 3h-3"/>'],
  trash: [16, '<path stroke-width="2" d="M1 2.500h14M3.500 5v9.500h9V5M6 1h4"/>'],
  net: [16, '<circle cx="8" cy="8" r="7" fill="#fff" stroke-width="2"/><path fill="currentColor" stroke="none" d="M1 5l5-3 1 3-3 3 3 3-1 4-4-5zM9 1l5 4v5l-3 3-1-4-2-2z"/>'],
  eject: [12, '<path fill="currentColor" stroke="none" d="M6 1l5 6H1zM1 9h10v2H1z"/>'],
  triLeft: [12, '<path fill="currentColor" stroke="none" d="M9 1v10L3 6z"/>'],
  triRight: [12, '<path fill="currentColor" stroke="none" d="M3 1v10l6-5z"/>'],
  triDown: [12, '<path fill="currentColor" stroke="none" d="M0 3h12L6 9z"/>'],
  back: [16, '<path stroke-width="2" d="M11 2L5 8l6 6"/>'],
  forward: [16, '<path stroke-width="2" d="M5 2l6 6-6 6"/>'],
  upward: [16, '<path stroke-width="2" d="M2 11l6-6 6 6"/>'],
  reload: [16, '<path stroke-width="2" d="M14 10a6.500 6.500 0 1 1-1-6.500"/><path fill="currentColor" stroke="none" d="M15 1v6H9z"/>'],
  clear: [16, '<path fill="currentColor" stroke="none" d="M0 8l5-6h9q2 0 2 2v8q0 2-2 2H5z"/><path stroke="#fff" stroke-width="2" d="M7 5.500l5 5M12 5.500l-5 5"/>'],
  toggle: [16, '<path stroke-width="2" d="M9 2h5v9H8M11 8l-3 3 3 3"/><path fill="currentColor" stroke="none" d="M0 11h3v3H0zM4 11h3v3H4z"/>'],
  term: [16, '<rect width="16" height="15" rx="2" fill="currentColor" stroke="none"/><text x="2" y="10" font-size="8" font-weight="700" font-family="Liberation Mono" fill="#fff">$_</text>'],
  newFolder: [16, '<path stroke-width="1.500" d="M8 14H2q-1 0-1-1V2h6l1 2h6q1 0 1 1v4"/><path stroke-width="2" d="M12 8v8M8 12h8"/>'],
  search: [16, '<circle cx="7" cy="7" r="5.500" stroke-width="2"/><path stroke-width="2" d="M11 11l4 4"/>'],
  vIcons: [16, '<path fill="currentColor" stroke="none" d="M1 1h6v6H1zM9 1h6v6H9zM1 9h6v6H1zM9 9h6v6H9z"/>'],
  vList: [16, '<path stroke-width="2" d="M6 3h9M6 8h9M6 13h9"/><path stroke-width="4" d="M1 3h4M1 8h4M1 13h4"/>'],
  vCompact: [16, '<path stroke-width="2" d="M2 4h4M2 8h4M2 12h4M10 4h4M10 8h4M10 12h4"/>'],
  folder: [16, '<path fill="#f9c46b" stroke="none" d="M1 2h5l2 2h7v11H1z"/>'],
  sbPlaces: [14, '<path fill="currentColor" stroke="none" d="M1 2h5l1 2h5v2H4L2 12H1z"/><path fill="currentColor" stroke="none" d="M4 6h9v6H3z"/>'],
  sbTree: [14, '<path stroke-width="2" d="M3 1v10M3 6h4M3 11h5M9 6h2M10 11h2"/>'],
  sbHide: [14, '<path stroke-width="2" d="M2 2h10v10H2z"/><path fill="currentColor" stroke="none" d="M8 4v6L4 7z"/>'],
  prog: [16, fileBox + '<path stroke="#bbb" stroke-width="2" stroke-dasharray="2 2" d="M5 3h6M7 5h5M5 7h6M7 9h5M5 11h6M7 13h5"/>'],
  text: [16, fileBox + '<path stroke="#999" d="M5 3.500h4M5 5.500h6M5 7.500h5M5 9.500h6M5 11.500h5M5 13.500h6"/>'],
  pic: [16, '<path fill="#5b2a63" stroke="#bbb" d="M1.500 1.500h13v12h-13z"/><path fill="#e8a05a" stroke="none" d="M2 13V9l7 1 5 3z"/><path fill="#b0508a" stroke="none" d="M2 5l5 1 1 4-6-1z"/>'],
  photoFile: [16, '<path fill="#c4c4c4" stroke="none" d="M1 4h14v9H1z"/><path stroke="#888" d="M2 12.500h13v-8"/>'],

  // launchers
  startGrid: [28, '<g stroke="none"><path fill="#b84a00" d="M0 0h8v8H0zM10 20h8v8h-8zM20 20h8v8h-8z"/><path fill="#ff6a00" d="M10 0h8v8h-8zM20 10h8v8h-8z"/><path fill="#ff8533" d="M0 10h8v8H0z"/><path fill="#d85a00" d="M20 0h8v8h-8zM10 10h8v8h-8zM0 20h8v8H0z"/></g>'],
  mint: [28, '<circle cx="14" cy="14" r="12.500" stroke-width="2.500"/><path stroke-width="2.500" d="M8 8v9q0 3 3 3h6q3 0 3-3v-4q0-2-2-2t-2 2v3M16 13q0-2-2-2t-2 2v3"/>'],
  aFirefox: [28, tile('url(#gFire)', '#d8404a') + '<path fill="#fff" stroke="none" d="M16 4q1 3 3 5l1-2q5 6 3 11-3 6-9 6-7-1-9-8 0-5 3-8l2 3q5-1 6-7z"/><path fill="#ff5350" stroke="none" d="M11 12q5-1 7 3 0 4-4 4t-5-3q3 0 4-2z"/>'],
  aMail: [28, tile('url(#gMail)', '#35549c') + '<path fill="#f4f4f4" stroke="none" d="M5 8h18v13H5z"/><path stroke="#888" d="M6 9l8 7 8-7M6 20l5-5M22 20l-5-5"/>'],
  aTerm: [28, tile('#2a2a2a', '#0c0c0c') + '<text x="4" y="12" font-size="9" font-family="Liberation Mono" fill="#eee">$_</text>'],
  aFolder: [28, '<path fill="#dca24c" stroke="none" d="M0 2h10l3 3h15v8H0z"/><path fill="#f4f0e8" stroke="none" d="M2 6h24v4H2z"/><path fill="#f9c46b" stroke="none" d="M0 8h28v19H0z"/>'],
  aCalc: [28, tile('#4c4c4c', '#333') + '<path fill="#ff7a1a" stroke="none" d="M14 14h13v8q0 5-5 5h-8z"/><path stroke="#222" d="M14 1v26M1 14h26"/><path stroke="#fff" stroke-width="1.500" d="M5 8h6M8 5v6M17 8h6M5 18l5 5M10 18l-5 5M17 19h6M17 22h6"/>'],
  aPulse: [28, tile('#2c3a2a', '#1a241a') + '<path stroke="#2bdc3a" stroke-width="1.500" d="M2 17h4l2-10 3 14 2-6 2 3h11"/>'],
  aPdf: [30, '<rect width="30" height="30" rx="2" fill="url(#gPdf)" stroke="none"/><text x="3" y="10" font-size="9" fill="#fff">PDF</text><path fill="#fff" stroke="#7a0c14" d="M12 25l3-7L28 9l2 2v4l-13 10z"/><path stroke="#8a0c14" stroke-width="1.500" d="M16 20l13-9M18 22l12-9"/>'],
  aInfo: [28, tile('url(#gInfo)', '#c87414') + '<circle cx="14" cy="14" r="9" fill="#fff" stroke="none"/><path stroke="#e08a20" stroke-width="3" d="M14 12v7M14 8v2.500"/>'],
  aMap: [28, '<path fill="#f05a32" stroke="#f05a32" stroke-width="2" d="M0 1l9 3 9-3 9 3 2-1-1 24-9-2-9 2-8-3-2 1z"/><path fill="#d03a20" stroke="#fff" stroke-width="2" d="M3 5l7 3 8-3 7 2v15l-7-2-8 3-7-3z"/><path fill="#e85034" stroke="none" d="M4 6l6 3v13l-6-2zM18 6l6 2v13l-6-2z"/>'],
  dGear: [28, tile('url(#gSlate)', '#2f3e46') + '<circle cx="14" cy="14" r="5.500" stroke="#fff" stroke-width="2"/><path stroke="#fff" stroke-width="2.500" d="M14 5v3M14 20v3M5 14h3M20 14h3M8 8l2 2M18 18l2 2M20 8l-2 2M10 18l-2 2"/>'],
  dTrash: [28, '<path fill="#666" stroke="#333" d="M4 6h20l-2 21H6z"/><path fill="#444" stroke="#222" d="M3 2h22v5H3z"/><path stroke="#eee" stroke-width="2" d="M11 16l3-4 3 4M18 18l-1 4h-2M13 22h-3l-1-4"/>'],
  dApps: [28, tile('#e8e8e8', '#aaa') + '<circle cx="14" cy="14" r="9" fill="#7cb342" stroke="none"/><path stroke="#fff" stroke-width="2" stroke-dasharray="2 2" d="M9 10h10M9 14h10M9 18h10"/>'],
  dSwitch: [28, tile('#e8e8e8', '#aaa') + '<rect x="5" y="6" width="18" height="6" rx="3" fill="#7cc04a" stroke="none"/><rect x="5" y="16" width="18" height="6" rx="3" fill="#888" stroke="none"/><rect x="14" y="7" width="8" height="4" rx="2" fill="#fff" stroke="none"/><rect x="6" y="17" width="8" height="4" rx="2" fill="#fff" stroke="none"/>'],
  dBox: [28, tile('#e01b1b', '#a80f0f') + '<path fill="#fff" stroke="none" d="M7 6h14v4h-3v2h2l2 9H6l2-9h2v-2H7z"/><path fill="#e01b1b" stroke="none" d="M13 9h3v6h3l-5 5-5-5h4z"/>'],
  dWave: [28, tile('url(#gWave)', '#5a8cb8') + '<circle cx="14" cy="14" r="9" fill="#6aaae8" stroke="none"/><path stroke="#d4ecff" stroke-width="2.500" d="M20 9q-8-3-11 5 0 6 6 7 6-1 4-6-3-3-5 0"/>'],
  dPhone: [28, '<path fill="#1f8f16" stroke="#f0f0f0" stroke-width="2" d="M1 27l3-8a12 11 0 1 1 5 5z"/><path fill="#fff" stroke="none" d="M9 7l3-1 2 5-2 2q2 4 5 5l2-2 4 2q-1 4-5 4-10-3-9-15z"/>'],
  dTelegram: [28, '<circle cx="14" cy="14" r="13" fill="url(#gTele)" stroke="none"/><path fill="#fff" stroke="none" d="M5 14l16-6-2 14-5-4-3 3v-5l7-6-9 5z"/>'],
  dWhats: [28, tile('#2cc867', '#1da04e') + '<path stroke="#fff" stroke-width="2" d="M6 22l1-5a8 8 0 1 1 4 4z"/><path stroke="#fff" stroke-width="2" d="M11 10q0 6 6 7"/>'],
  dInk: [28, '<circle cx="14" cy="14" r="13" fill="#1c1c1c" stroke="none"/><path stroke="#888" stroke-width="2" d="M6 6q8-6 16 0"/><path fill="#f4f4f4" stroke="none" d="M2 10l10 2 4-1 10-1-5 6-3 1-4 6-4-6-4-2z"/>'],
  dSnake: [28, '<circle cx="14" cy="14" r="13" fill="#f23e62" stroke="none"/><path stroke="#fff" stroke-width="1.500" d="M3 16q0-8 2-8t2 5v5q0 3 2 3t2-3V9q0-2 1-2t2 2v7q0 2 1 2t2-2V8h3v9l3-8v6"/>'],
  dHdd: [28, '<path fill="#444" stroke="#222" d="M3 2h22v24H3z"/><path fill="#3c7a34" stroke="none" d="M5 3h10v4H5z"/><circle cx="13" cy="16" r="8" fill="#ccc" stroke="#888"/><circle cx="13" cy="16" r="3" fill="#777" stroke="#fff"/><path stroke="#fff" stroke-width="2" d="M23 5l-9 7"/>'],
  dCarton: [28, '<path fill="#d0ac6a" stroke="#a8884c" d="M3 4h22l2 3v17H1V7z"/><path fill="#c29c58" stroke="none" d="M3 4h22l2 3H1z"/><path fill="#e8d4a8" stroke="none" d="M12 4h4v7h-4z"/>'],
  dCube: [28, '<g stroke="#222" fill="#fff" stroke-width="1.500"><path d="M1 10l13-6 13 6v9l-13 6-13-6z"/><path d="M23 12l-9-4-9 4v4l9 5 9-4v-3l-9-4-4 2v3l4 2 4-2"/></g>'],
  dTux: [28, '<path fill="#dcdcdc" stroke="#12355c" stroke-width="2" d="M1 1h26v26H1z"/><path fill="#222" stroke="none" d="M14 4q4 0 4 6l4 9-3 4H9l-3-4 4-9q0-6 4-6z"/><path fill="#fff" stroke="none" d="M14 11q4 4 4 9l-4 2-4-2q0-5 4-9z"/><path fill="#f9a825" stroke="none" d="M7 18l5 6H5zM21 18l-5 6h7zM12 9h4l-2 3z"/>'],
  dSweep: [28, tile('url(#gSweep)', '#4c58a8') + '<path fill="#fff" stroke="none" d="M9 13l11-2 2 11H5q4-3 4-9zM10 10l10-2v2l-10 2z"/><path stroke="#fff" stroke-width="2.500" d="M15 9l2-5"/>'],

  // tray
  tCup: [20, '<rect x="1" y="1" width="17" height="18" rx="3" fill="#b01018" stroke="#700"/><path fill="#fff" stroke="none" d="M6 5h7q0 5-3 6v3h2v1H7v-1h2v-3q-3-1-3-6z"/>'],
  tPick: [18, '<path fill="currentColor" stroke="none" d="M12 2q4-2 5 2l-3 4 1 2-2 1-1-1-6 6-5 1 1-5 6-6-1-1 2-2z"/>'],
  tGear: [24, '<circle cx="12" cy="12" r="12" fill="#51627e" stroke="none"/><circle cx="12" cy="12" r="8" stroke-width="3" stroke-dasharray="2 1"/><circle cx="12" cy="12" r="6"/><path fill="currentColor" stroke="none" d="M12 8a4 4 0 0 0 0 8z"/>'],
  tSun: [18, '<path stroke-width="2" d="M8 0v3M2 3l2 2M14 3l-2 2M0 9h3M5 9a4 4 0 0 1 6-2"/><path stroke-width="2" d="M7 16a3 3 0 1 1 1-5 4 4 0 1 1 4 5z"/>'],
  tUsb: [18, '<path stroke-width="2" d="M3 2h12v14H3z"/><path fill="currentColor" stroke="none" d="M9 5l3 4H6zM6 10h6v2H6z"/>'],
  tShield: [18, '<path stroke-width="1.500" d="M9 1l7 2q1 9-7 14-8-5-7-14z"/><path fill="currentColor" stroke="none" d="M9 4l4 1q1 6-4 9-5-3-4-9z"/>'],
  tFlag: [26, '<path fill="#eee" stroke="none" d="M0 4h26v18H0z"/><path stroke="#c8414b" stroke-width="2" d="M0 5h26M0 9h26M0 13h26M0 17h26M0 21h26"/><path fill="#3c4a86" stroke="none" d="M0 4h14v10H0z"/>'],
  tWifi: [18, '<path stroke-width="2" d="M1 7q8-7 16 0M4 10q5-4 10 0M7 13q2-2 4 0"/><path fill="currentColor" stroke="none" d="M7 14h4l-2 3z"/>'],
  tSound: [18, '<path fill="currentColor" stroke="none" d="M0 6h4l5-5v16l-5-5H0z"/><path stroke-width="1.500" d="M11 6q2 3 0 6M13 3q4 6 0 12"/>']
};

function draw(name) {
  const def = icons[name];
  const [size, body] = Array.isArray(def) ? def : [24, def];
  return `<svg width="${size}" height="${size}" viewBox="0 0 ${size} ${size}" aria-hidden="true">${body}</svg>`;
}

document.querySelectorAll('[data-tools]').forEach(bar => {
  const html = bar.dataset.tools.split(' ').map(t => {
    if (t === '#') return '<span class="grip"></span>';
    if (t === '|') return '<span class="sep"></span>';
    return `<button class="${t === 'cursor' ? 'active' : ''}" aria-label="${t}">${draw(t)}</button>`;
  }).join('');
  bar.insertAdjacentHTML('afterbegin', html);
});

const files = [
  ['folder', 'City', '24 объекта', 'Папка', 'Вс 22 дек 2024 16:46:08'],
  ['prog', 'IZA_dots.DAT', '59,7 КБ', 'Программа', 'Чт 03 ноя 2011 14:30:46'],
  ['prog', 'IZA_dots.ID', '268 байт', 'Программа', 'Пн 14 ноя 2011 15:20:30'],
  ['prog', 'IZA_dots.MAP', '11,3 КБ', 'Программа', 'Пн 14 ноя 2011 15:20:30'],
  ['text', 'IZA_dots.tab', '2,6 КБ', 'Текст', 'Пн 14 ноя 2011 15:20:30'],
  ['prog', 'IZA_poly.DAT', '6,1 КБ', 'Программа', 'Чт 03 ноя 2011 14:30:48'],
  ['pic', 'IZA_poly.ID', '12 байт', 'Изображение', 'Ср 23 ноя 2011 11:24:56'],
  ['prog', 'IZA_poly.MAP', '2,6 КБ', 'Программа', 'Ср 23 ноя 2011 11:24:56'],
  ['text', 'IZA_poly.tab', '2,6 КБ', 'Текст', 'Ср 23 ноя 2011 11:24:56'],
  ['text', 'mi10 Индекс Глаза.WOR', '12,2 КБ', 'Текст', 'Пн 19 дек 2011 11:37:48'],
  ['text', 'mi10 Индекс Гормон.WOR', '12,3 КБ', 'Текст', 'Пн 19 дек 2011 11:38:16'],
  ['text', 'mi10 Индекс иммунитет.WOR', '12,2 КБ', 'Текст', 'Пн 19 дек 2011 11:38:34'],
  ['text', 'mi10 Индекс кост сист.WOR', '12,2 КБ', 'Текст', 'Пн 19 дек 2011 11:39:00'],
  ['text', 'mi10 Индекс кровь.WOR', '12,2 КБ', 'Текст', 'Пн 19 дек 2011 11:39:18'],
  ['text', 'mi10 Индекс ОД.WOR', '12,2 КБ', 'Текст', 'Пн 19 дек 2011 11:39:34'],
  ['text', 'mi10 Индекс печень.WOR', '12,2 КБ', 'Текст', 'Пн 19 дек 2011 11:39:52'],
  ['text', 'mi10 Индекс почки.WOR', '11,9 КБ', 'Текст', 'Пн 19 дек 2011 11:40:12'],
  ['text', 'mi10 Индекс развитие.WOR', '12,0 КБ', 'Текст', 'Пн 19 дек 2011 11:40:28'],
  ['text', 'mi10 Индекс репрод.WOR', '12,0 КБ', 'Текст', 'Пн 19 дек 2011 11:40:48'],
  ['text', 'mi10 Индекс с.с.с.WOR', '12,0 КБ', 'Текст', 'Пн 19 дек 2011 11:41:14'],
  ['text', 'mi10 Индекс системн.WOR', '11,8 КБ', 'Текст', 'Пн 19 дек 2011 11:41:30'],
  ['text', 'mi10 Индекс Смертность.WOR', '12,2 КБ', 'Текст', 'Вт 20 дек 2011 10:14:30'],
  ['text', 'mi10 Индекс суммарный.WOR', '12,3 КБ', 'Текст', 'Пн 19 дек 2011 11:25:26'],
  ['text', 'mi10 Индекс ЦНС.WOR', '12,2 КБ', 'Текст', 'Пн 19 дек 2011 11:42:14'],
  ['photoFile', 'AAP3.JPG', '6,0 МБ', 'Изображение', 'Пн 14 ноя 2011 14:07:22'],
  ['text', '', 'байт', '', '']
];

document.getElementById('rows').innerHTML = files.map(([kind, name, size, type, date], i) =>
  `<tr><td><div class="name"><span class="twist" ${i ? '' : 'data-icon="triRight"'}></span><span class="kind" data-icon="${kind}"></span>${name}</div></td>
   <td>${size}</td><td>${type}</td><td>${date}</td><td>${name && 'н/д'}</td></tr>`).join('');

const dock = ['dGear', 'dTrash', 'dApps', 'dSwitch', 'dBox', 'dWave', 'dPhone', 'dTelegram', 'dWhats', 'aInfo', 'dInk',
  'dSnake', 'dHdd', 'dCarton', 'dCube', 'dTux', 'aPulse', 'dSweep', 'aMail', 'aFirefox', 'aMap', 'aFolder'];
document.getElementById('dock').innerHTML = dock.map(n => `<button data-icon="${n}" aria-label="${n}"></button>`).join('');

document.querySelectorAll('[data-icon]').forEach(el => el.insertAdjacentHTML('beforeend', draw(el.dataset.icon)));
```
